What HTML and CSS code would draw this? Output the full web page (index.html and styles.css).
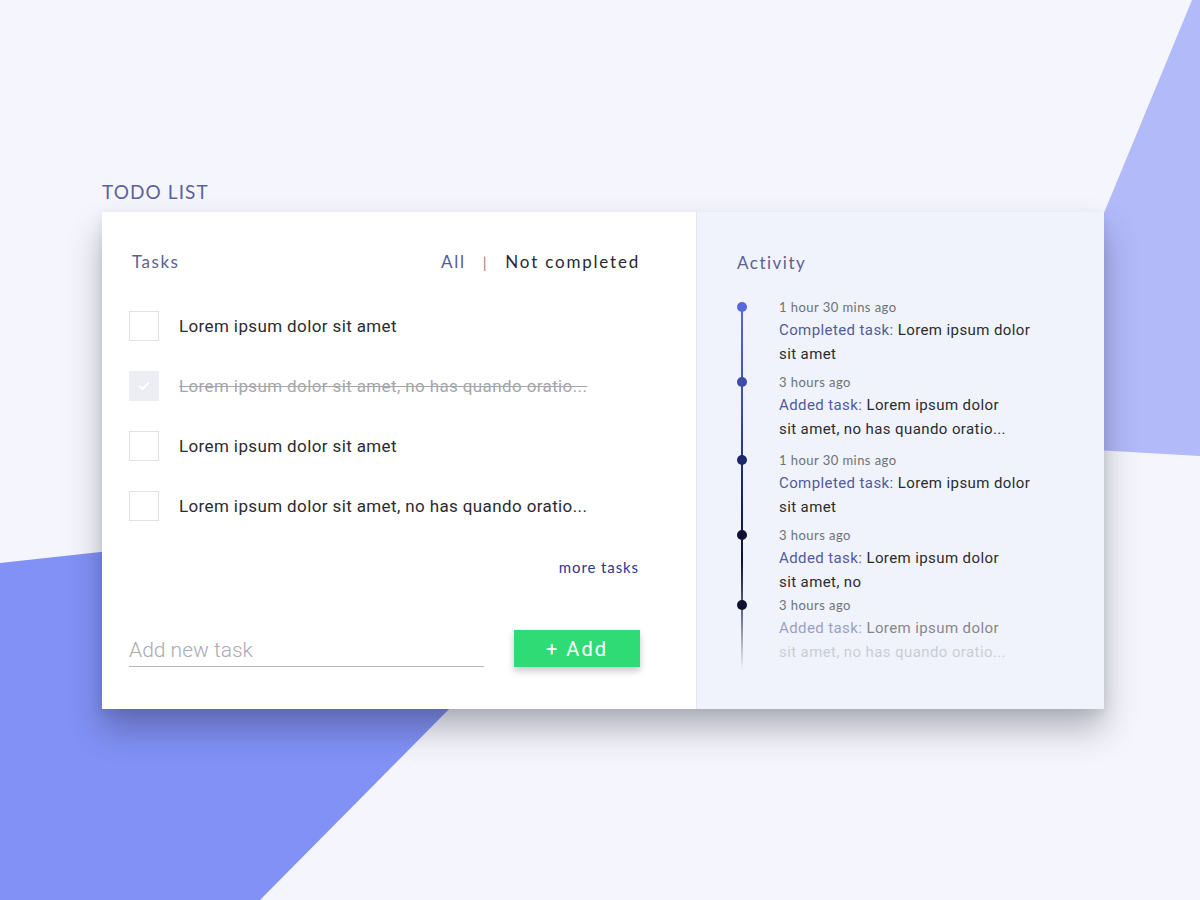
FILE: index.html
```html
<!DOCTYPE html>
<html lang="en">
<head>
<meta charset="utf-8">
<title>Todo list</title>
<link rel="stylesheet" href="styles.css">
</head>
<body>
<svg class="backdrop" width="1200" height="900" viewBox="0 0 1200 900" aria-hidden="true">
  <polygon points="1192,0 1200,0 1200,456 1008,445" fill="#b3bafa"/>
  <polygon points="0,563 666,490 260,900 0,900" fill="#8291f6"/>
</svg>
<main class="page">
  <h1 class="title">TODO LIST</h1>
  <section class="card">
    <div class="tasks">
      <header class="tasks-head">
        <span class="label">Tasks</span>
        <nav class="filters">
          <span class="filter-all">All</span>
          <span class="sep">|</span>
          <span class="filter-active">Not completed</span>
        </nav>
      </header>
      <ul class="task-list">
        <li class="task"><span class="box"></span><span class="task-text">Lorem ipsum dolor sit amet</span></li>
        <li class="task done"><span class="box checked"><svg width="12" height="10" viewBox="0 0 12 10"><path d="M1.5 5.2 4.5 8 10.5 1.8" fill="none" stroke="#fff" stroke-width="1.8" stroke-linecap="round" stroke-linejoin="round"/></svg></span><span class="task-text">Lorem ipsum dolor sit amet, no has quando oratio...</span></li>
        <li class="task"><span class="box"></span><span class="task-text">Lorem ipsum dolor sit amet</span></li>
        <li class="task"><span class="box"></span><span class="task-text">Lorem ipsum dolor sit amet, no has quando oratio...</span></li>
      </ul>
      <div class="more"><span>more tasks</span></div>
      <div class="add-row">
        <input class="add-input" type="text" placeholder="Add new task">
        <button class="add-btn" type="button">+ Add</button>
      </div>
    </div>
    <aside class="activity">
      <div class="label">Activity</div>
      <ol class="timeline">
        <li class="event e1">
          <div class="time">1 hour 30 mins ago</div>
          <div class="desc"><span class="kind">Completed task:</span> Lorem ipsum dolor<br>sit amet</div>
        </li>
        <li class="event e2">
          <div class="time">3 hours ago</div>
          <div class="desc"><span class="kind">Added task:</span> Lorem ipsum dolor<br>sit amet, no has quando oratio...</div>
        </li>
        <li class="event e3">
          <div class="time">1 hour 30 mins ago</div>
          <div class="desc"><span class="kind">Completed task:</span> Lorem ipsum dolor<br>sit amet</div>
        </li>
        <li class="event e4">
          <div class="time">3 hours ago</div>
          <div class="desc"><span class="kind">Added task:</span> Lorem ipsum dolor<br>sit amet, no</div>
        </li>
        <li class="event e5">
          <div class="time">3 hours ago</div>
          <div class="desc fade"><span class="kind">Added task:</span> Lorem ipsum dolor<br><span class="faint">sit amet, no has quando oratio...</span></div>
        </li>
      </ol>
    </aside>
  </section>
</main>
</body>
</html>
```
FILE: styles.css
```css
* { box-sizing: border-box; }
html, body { margin: 0; padding: 0; }
body {
  width: 1200px;
  height: 900px;
  overflow: hidden;
  background: #f5f6fd;
  font-family: Roboto, "Liberation Sans", sans-serif;
  position: relative;
}
.backdrop {
  position: absolute;
  left: 0;
  top: 0;
  z-index: 0;
}
.page {
  position: relative;
  z-index: 1;
  padding: 181px 0 0 102px;
}
.title {
  margin: 0 0 9px 0;
  font-family: Lato, "Open Sans", sans-serif;
  font-weight: 400;
  font-size: 19px;
  line-height: 22px;
  letter-spacing: 1.1px;
  color: #5a62a0;
}
.card {
  width: 1002px;
  height: 497px;
  display: grid;
  grid-template-columns: 594px 408px;
  background: #fff;
  box-shadow: 0 20px 32px rgba(20, 22, 40, 0.3), 0 4px 10px rgba(20, 22, 40, 0.08);
}
.label {
  font-family: Lato, "Open Sans", sans-serif;
  font-size: 17px;
  line-height: 20px;
  letter-spacing: 1.5px;
  color: #5b6197;
}
.tasks {
  padding: 40px 58px 0 27px;
}
.tasks-head {
  display: flex;
  justify-content: space-between;
  align-items: center;
  height: 20px;
}
.tasks-head .label { padding-left: 3px; }
.filters {
  display: flex;
  gap: 17px;
  font-family: Lato, "Open Sans", sans-serif;
  font-size: 17px;
  line-height: 20px;
  letter-spacing: 1.8px;
  margin-right: -2px;
}
.filter-all { color: #565c93; }
.sep { color: #8a8a90; font-size: 15px; }
.filter-active { color: #2a2a2e; }
.task-list {
  list-style: none;
  margin: 39px 0 0 0;
  padding: 0;
  display: flex;
  flex-direction: column;
  gap: 30px;
}
.task {
  display: flex;
  align-items: center;
  gap: 20px;
  height: 30px;
}
.box {
  flex: none;
  width: 30px;
  height: 30px;
  border: 1px solid #e2e3e6;
  display: flex;
  align-items: center;
  justify-content: center;
}
.box.checked {
  background: #eceef4;
  border-color: #eceef4;
}
.task-text {
  font-size: 17px;
  letter-spacing: 0.38px;
  color: #2b2b2f;
}
.task.done .task-text {
  color: #a6a6aa;
  text-decoration: line-through;
  text-decoration-color: #a6a6aa;
}
.more {
  margin-top: 36px;
  text-align: right;
  font-family: Lato, "Open Sans", sans-serif;
  font-size: 15px;
  line-height: 20px;
  letter-spacing: 0.9px;
  color: #2b378e;
  margin-right: -1px;
}
.add-row {
  margin-top: 53px;
  display: flex;
  justify-content: space-between;
  align-items: flex-end;
  margin-right: -2px;
}
.add-input {
  width: 355px;
  height: 37px;
  border: none;
  border-bottom: 1px solid #b9b9bd;
  padding: 3px 0 0 0;
  background: transparent;
  font-family: Roboto, sans-serif;
  font-weight: 300;
  font-size: 21px;
  color: #333;
  outline: none;
}
.add-input::placeholder { color: #aaaab0; }
.add-btn {
  width: 126px;
  height: 37px;
  border: none;
  background: #2edb74;
  color: #fff;
  font-family: Roboto, sans-serif;
  font-size: 20px;
  font-weight: 400;
  letter-spacing: 2px;
  box-shadow: 0 4px 7px rgba(0, 0, 0, 0.22);
  margin-bottom: 0;
}
.activity {
  background: #f0f3fb;
  border-left: 1px solid #e4e6ee;
  padding: 41px 0 0 40px;
}
.timeline {
  list-style: none;
  margin: 24px 0 0 0;
  padding: 0 0 0 42px;
  position: relative;
}
.timeline::before {
  content: "";
  position: absolute;
  left: 4px;
  top: 12px;
  height: 360px;
  width: 1.5px;
  background: linear-gradient(to bottom, #5668d8 0%, #3a4aa6 28%, #1d276c 48%, #0e1334 70%, rgba(14, 19, 52, 0.6) 85%, rgba(14, 19, 52, 0) 100%);
}
.event {
  position: relative;
  margin-bottom: 6px;
}
.event::before {
  content: "";
  position: absolute;
  left: -42px;
  top: 5px;
  width: 10px;
  height: 10px;
  border-radius: 50%;
}
.e1::before { background: #5668de; }
.e2::before { background: #3c4ca8; }
.e3::before { background: #1d276c; }
.e4::before { background: #0e1230; }
.e5::before { background: #0e1230; }
.e3 { margin-top: 9px; }
.e5 { margin-top: -5px; }
.time {
  font-family: Lato, "Open Sans", sans-serif;
  font-size: 13px;
  line-height: 20px;
  letter-spacing: 0.45px;
  color: #6f7076;
}
.desc {
  margin-top: 1px;
  font-size: 15px;
  line-height: 24px;
  letter-spacing: 0.4px;
  color: #2b2b30;
}
.kind { color: #535a9e; }
.desc.fade { opacity: 0.55; }
.desc .faint { opacity: 0.35; }
```
